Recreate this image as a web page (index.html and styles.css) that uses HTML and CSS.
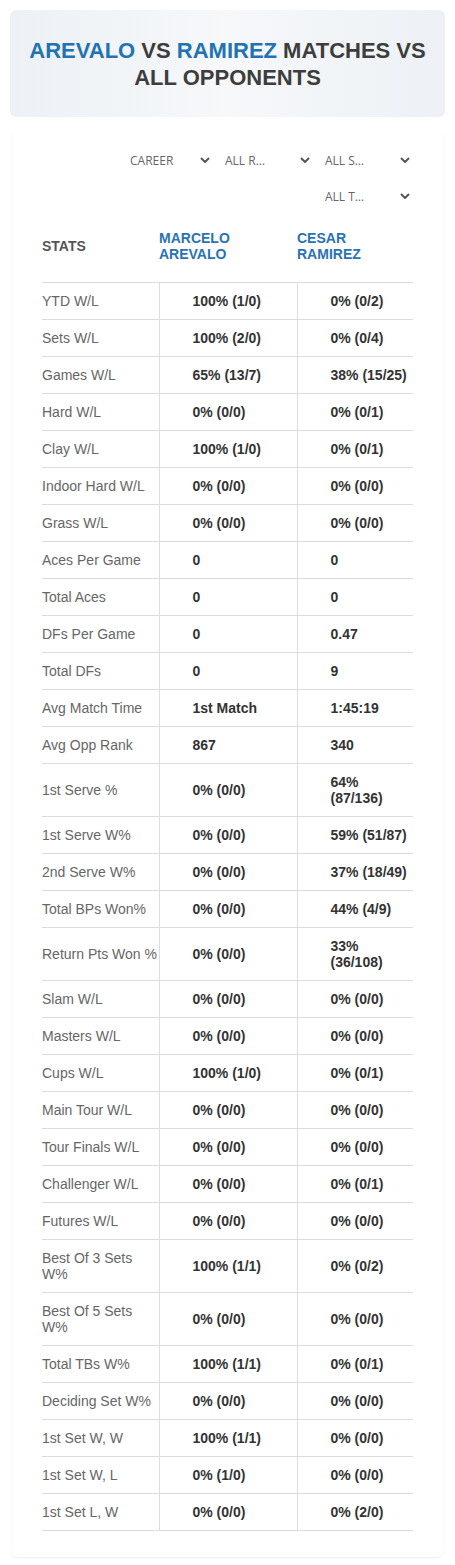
FILE: index.html
```html
<!DOCTYPE html>
<html lang="en">
  <head>
    <meta charset="UTF-8" />
    <meta name="viewport" content="width=device-width, initial-scale=1.0" />
    <title>Arevalo vs Ramirez</title>
    <link rel="stylesheet" href="styles.css">
  </head>
  <body>
    <div class="title-box">
      <h1><span class="player">AREVALO</span> VS <span class="player">RAMIREZ</span> MATCHES VS ALL OPPONENTS</h1>
    </div>

    <div class="card">
      <div class="filters">
        <div class="select first">CAREER<svg viewBox="0 0 10 6"><path d="M1 1l4 4 4-4" /></svg></div>
        <div class="select">ALL R…<svg viewBox="0 0 10 6"><path d="M1 1l4 4 4-4" /></svg></div>
        <div class="select">ALL S…<svg viewBox="0 0 10 6"><path d="M1 1l4 4 4-4" /></svg></div>
        <div class="select">ALL T…<svg viewBox="0 0 10 6"><path d="M1 1l4 4 4-4" /></svg></div>
      </div>

      <table class="stats">
        <colgroup>
          <col class="c-label" />
          <col class="c-p1" />
          <col class="c-p2" />
        </colgroup>
        <thead>
          <tr>
            <th class="stats-head">STATS</th>
            <th class="name">MARCELO AREVALO</th>
            <th class="name">CESAR RAMIREZ</th>
          </tr>
        </thead>
        <tbody id="rows"></tbody>
      </table>
    </div>

    <script>
      const rows = [
        ["YTD W/L", "100% (1/0)", "0% (0/2)"],
        ["Sets W/L", "100% (2/0)", "0% (0/4)"],
        ["Games W/L", "65% (13/7)", "38% (15/25)"],
        ["Hard W/L", "0% (0/0)", "0% (0/1)"],
        ["Clay W/L", "100% (1/0)", "0% (0/1)"],
        ["Indoor Hard W/L", "0% (0/0)", "0% (0/0)"],
        ["Grass W/L", "0% (0/0)", "0% (0/0)"],
        ["Aces Per Game", "0", "0"],
        ["Total Aces", "0", "0"],
        ["DFs Per Game", "0", "0.47"],
        ["Total DFs", "0", "9"],
        ["Avg Match Time", "1st Match", "1:45:19"],
        ["Avg Opp Rank", "867", "340"],
        ["1st Serve %", "0% (0/0)", "64% (87/136)"],
        ["1st Serve W%", "0% (0/0)", "59% (51/87)"],
        ["2nd Serve W%", "0% (0/0)", "37% (18/49)"],
        ["Total BPs Won%", "0% (0/0)", "44% (4/9)"],
        ["Return Pts Won %", "0% (0/0)", "33% (36/108)"],
        ["Slam W/L", "0% (0/0)", "0% (0/0)"],
        ["Masters W/L", "0% (0/0)", "0% (0/0)"],
        ["Cups W/L", "100% (1/0)", "0% (0/1)"],
        ["Main Tour W/L", "0% (0/0)", "0% (0/0)"],
        ["Tour Finals W/L", "0% (0/0)", "0% (0/0)"],
        ["Challenger W/L", "0% (0/0)", "0% (0/1)"],
        ["Futures W/L", "0% (0/0)", "0% (0/0)"],
        ["Best Of 3 Sets W%", "100% (1/1)", "0% (0/2)"],
        ["Best Of 5 Sets W%", "0% (0/0)", "0% (0/0)"],
        ["Total TBs W%", "100% (1/1)", "0% (0/1)"],
        ["Deciding Set W%", "0% (0/0)", "0% (0/0)"],
        ["1st Set W, W", "100% (1/1)", "0% (0/0)"],
        ["1st Set W, L", "0% (1/0)", "0% (0/0)"],
        ["1st Set L, W", "0% (0/0)", "0% (2/0)"],
      ];

      const body = document.getElementById("rows");
      rows.forEach(([label, a, b]) => {
        const tr = document.createElement("tr");
        tr.innerHTML = `<td class="label">${label}</td><td class="val">${a}</td><td class="val">${b}</td>`;
        body.appendChild(tr);
      });
    </script>
  </body>
</html>
```

FILE: styles.css
```css
body {
  margin: 0;
  padding: 10px;
  background-color: #fff;
  font-family: "Liberation Sans", Arial, sans-serif;
  color: #333;
}
.title-box {
  height: 107px;
  border-radius: 6px;
  background: linear-gradient(90deg, #edf1f5 0%, #f6f8fa 50%, #edf1f5 100%);
  display: flex;
  align-items: center;
  justify-content: center;
  padding: 0 14px;
}
h1 {
  margin: 0;
  font-size: 22px;
  line-height: 27px;
  font-weight: bold;
  text-align: center;
  color: #3d3d3d;
}
.player {
  color: #2272b4;
}
.card {
  margin: 11px 2px 0;
  padding: 14px 30px 26px;
  border-radius: 6px;
  box-shadow: 0 1px 2px rgba(0, 0, 0, 0.07);
}
.filters {
  display: flex;
  flex-wrap: wrap;
  justify-content: flex-end;
}
.select {
  width: 95px;
  height: 36px;
  margin-left: 5px;
  padding: 0 3px 0 7px;
  box-sizing: border-box;
  display: flex;
  align-items: center;
  justify-content: space-between;
  font-family: "Open Sans", sans-serif;
  font-size: 12px;
  color: #666;
}
.select.first {
  padding-left: 12px;
}
.select svg {
  width: 10px;
  height: 6px;
  fill: none;
  stroke: #555;
  stroke-width: 2;
}
.stats {
  width: 100%;
  margin-top: 8px;
  border-collapse: collapse;
  table-layout: fixed;
  font-size: 14px;
  line-height: 16px;
}
.c-label {
  width: 117px;
}
.c-p1 {
  width: 138px;
}
.c-p2 {
  width: 116px;
}
th {
  text-align: left;
  font-weight: bold;
  padding: 8px 0 20px;
  vertical-align: middle;
  border-bottom: 1px solid #ddd;
}
.stats-head {
  color: #555;
}
.name {
  color: #2a72b2;
  padding-right: 20px;
}
td {
  padding: 10px 0 10px;
  border-bottom: 1px solid #ddd;
  vertical-align: middle;
}
.label {
  color: #666;
}
.val {
  font-weight: bold;
  color: #333;
  padding-left: 33px;
  padding-right: 6px;
  border-left: 1px solid #ddd;
}
```
